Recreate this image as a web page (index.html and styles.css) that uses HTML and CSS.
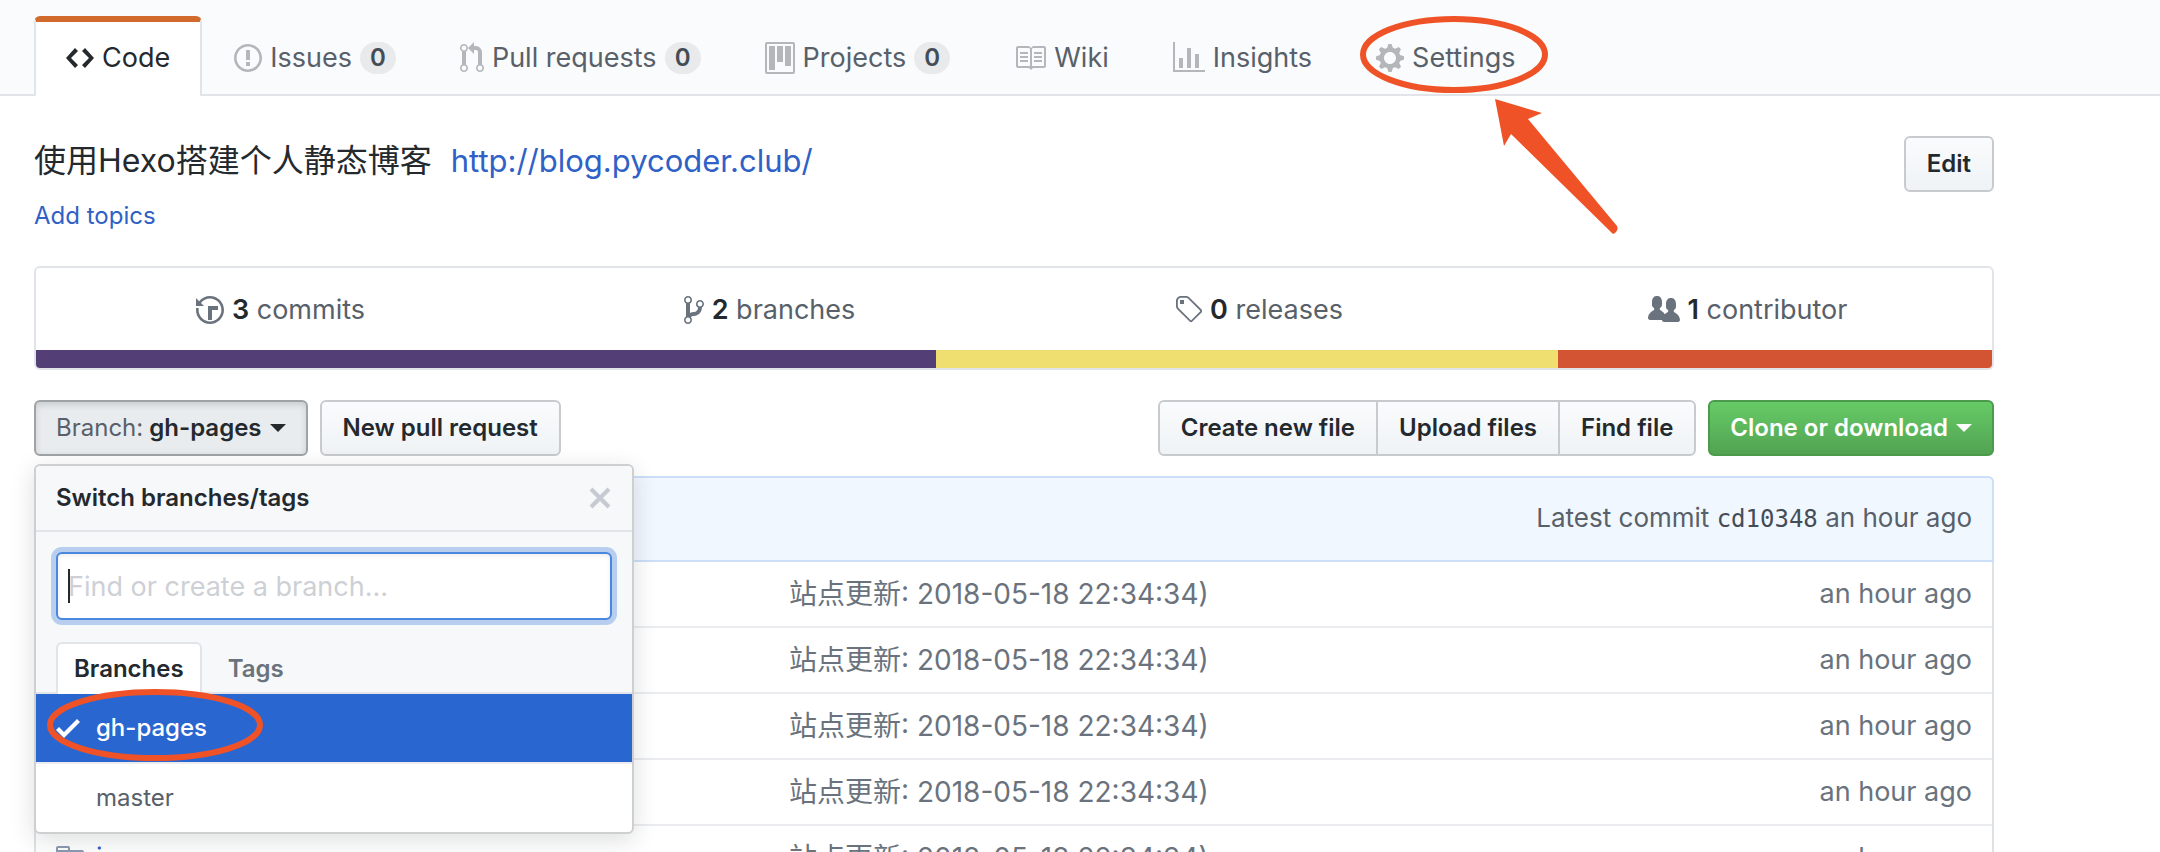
FILE: index.html
```html
<!DOCTYPE html>
<html lang="en">
<head>
<meta charset="utf-8">
<title>Repository</title>
<link rel="stylesheet" href="styles.css">
</head>
<body>
<header class="repo-head">
  <nav class="tabs" aria-label="Repository">
    <a class="tab tab-current" href="#code"><svg class="icon" width="28" height="32" viewBox="0 0 14 16"><path d="M9.5 3L8 4.5 11.5 8 8 11.5 9.5 13 14 8 9.5 3zm-5 0L0 8l4.5 5L6 11.5 2.5 8 6 4.5 4.5 3z"/></svg>Code</a>
    <a class="tab" href="#issues"><svg class="icon" width="28" height="32" viewBox="0 0 14 16"><path d="M7 2.3c3.14 0 5.7 2.56 5.7 5.7s-2.56 5.7-5.7 5.7A5.71 5.71 0 0 1 1.3 8c0-3.14 2.56-5.7 5.7-5.7zM7 1C3.14 1 0 4.14 0 8s3.14 7 7 7 7-3.14 7-7-3.14-7-7-7zm1 3H6v5h2V4zm0 6H6v2h2v-2z"/></svg>Issues<span class="counter">0</span></a>
    <a class="tab" href="#pulls"><svg class="icon" width="24" height="32" viewBox="0 0 12 16"><path d="M11 11.28V5c-.03-.78-.34-1.47-.94-2.06C9.46 2.35 8.78 2.03 8 2H7V0L4 3l3 3V4h1c.27.02.48.11.69.31.21.2.3.42.31.69v6.28A1.993 1.993 0 0 0 10 15a1.993 1.993 0 0 0 1-3.72zm-1 2.92c-.66 0-1.2-.55-1.2-1.2 0-.65.55-1.2 1.2-1.2.65 0 1.2.55 1.2 1.2 0 .65-.55 1.2-1.2 1.2zM4 3c0-1.11-.89-2-2-2a1.993 1.993 0 0 0-1 3.72v6.56A1.993 1.993 0 0 0 2 15a1.993 1.993 0 0 0 1-3.72V4.72c.59-.34 1-.98 1-1.72zm-.8 10c0 .66-.55 1.2-1.2 1.2-.65 0-1.2-.55-1.2-1.2 0-.65.55-1.2 1.2-1.2.65 0 1.2.55 1.2 1.2zM2 4.2C1.34 4.2.8 3.65.8 3c0-.65.55-1.2 1.2-1.2.65 0 1.2.55 1.2 1.2 0 .65-.55 1.2-1.2 1.2z"/></svg>Pull requests<span class="counter">0</span></a>
    <a class="tab" href="#projects"><svg class="icon" width="30" height="32" viewBox="0 0 15 16"><path fill-rule="evenodd" d="M10 12h3V2h-3v10zm-4-2h3V2H6v8zm-4 4h3V2H2v12zm-1 1h13V1H1v14zM14 0H1a1 1 0 0 0-1 1v14a1 1 0 0 0 1 1h13a1 1 0 0 0 1-1V1a1 1 0 0 0-1-1z"/></svg>Projects<span class="counter">0</span></a>
    <a class="tab" href="#wiki"><svg class="icon" width="32" height="32" viewBox="0 0 16 16"><path d="M3 5h4v1H3V5zm0 3h4V7H3v1zm0 2h4V9H3v1zm11-5h-4v1h4V5zm0 2h-4v1h4V7zm0 2h-4v1h4V9zm2-6v9c0 .55-.45 1-1 1H9.5l-1 1-1-1H2c-.55 0-1-.45-1-1V3c0-.55.45-1 1-1h5.5l1 1 1-1H15c.55 0 1 .45 1 1zm-8 .5L7.5 3H2v9h6V3.5zm7-.5H9.5l-.5.5V12h6V3z"/></svg>Wiki</a>
    <a class="tab" href="#insights"><svg class="icon" width="32" height="32" viewBox="0 0 16 16"><path d="M16 14v1H0V0h1v14h15zM5 13H3V8h2v5zm4 0H7V3h2v10zm4 0h-2V6h2v7z"/></svg>Insights</a>
    <a class="tab" href="#settings"><svg class="icon" width="28" height="32" viewBox="0 0 14 16"><path d="M14 8.77v-1.6l-1.94-.64-.45-1.09.88-1.84-1.13-1.13-1.81.91-1.09-.45-.69-1.92h-1.6l-.63 1.94-1.11.45-1.84-.88-1.13 1.13.91 1.81-.45 1.09L0 7.23v1.59l1.94.64.45 1.09-.88 1.84 1.13 1.13 1.81-.91 1.09.45.69 1.92h1.59l.63-1.94 1.11-.45 1.84.88 1.13-1.13-.92-1.81.47-1.09L14 8.75v.02zM7 11c-1.66 0-3-1.34-3-3s1.34-3 3-3 3 1.34 3 3-1.34 3-3 3z"/></svg>Settings<svg class="mark mark-settings" width="270" height="230" viewBox="1356 10 270 230" aria-hidden="true"><ellipse cx="1455" cy="54.500" rx="91" ry="35.500"/><path d="M1496 99L1543 113L1529 119L1618 226Q1620 231 1614 234L1512 134L1505 146Z"/></svg></a>
  </nav>
</header>

<main class="page">
  <section class="about">
    <div>
      <p class="about-text">使用Hexo搭建个人静态博客 <a class="about-link" href="http://blog.pycoder.club/">http://blog.pycoder.club/</a></p>
      <a class="topics" href="#topics">Add topics</a>
    </div>
    <button class="btn" type="button">Edit</button>
  </section>

  <section class="summary">
    <div class="stats">
      <a class="stat" href="#commits"><svg class="icon" width="28" height="32" viewBox="0 0 14 16"><path d="M8 13H6V6h5v2H8v5zM7 1C4.81 1 2.87 2.02 1.59 3.59L0 2v4h4L2.5 4.5C3.55 3.17 5.17 2.3 7 2.3c3.14 0 5.7 2.56 5.7 5.7s-2.56 5.7-5.7 5.7A5.71 5.71 0 0 1 1.3 8c0-.34.03-.67.09-1H.08C.03 7.33 0 7.66 0 8c0 3.86 3.14 7 7 7s7-3.14 7-7-3.14-7-7-7z"/></svg><span><b>3</b> commits</span></a>
      <a class="stat" href="#branches"><svg class="icon" width="20" height="32" viewBox="0 0 10 16"><path d="M10 5c0-1.110-.89-2-2-2a1.993 1.993 0 0 0-1 3.720v.3c-.02.52-.23.98-.63 1.380-.4.4-.86.61-1.380.63-.83.02-1.480.16-2 .45V4.720a1.993 1.993 0 0 0-1-3.720C.88 1 0 1.890 0 3a2 2 0 0 0 1 1.720v6.560c-.59.35-1 .99-1 1.720 0 1.110.89 2 2 2 1.110 0 2-.89 2-2 0-.53-.2-1-.53-1.360.09-.06.48-.41.59-.47.25-.11.56-.17.94-.17 1.050-.05 1.950-.45 2.750-1.250S8.950 7.770 9 6.730h-.02C9.590 6.370 10 5.730 10 5zM2 1.800c.66 0 1.200.55 1.200 1.200 0 .65-.55 1.200-1.200 1.200C1.350 4.200.8 3.650.8 3c0-.65.55-1.200 1.200-1.200zm0 12.410c-.66 0-1.200-.55-1.200-1.200 0-.65.55-1.200 1.200-1.200.65 0 1.200.55 1.200 1.200 0 .65-.55 1.200-1.200 1.200zm6-8c-.66 0-1.200-.55-1.200-1.200 0-.65.55-1.200 1.200-1.200.65 0 1.200.55 1.200 1.200 0 .65-.55 1.200-1.200 1.200z"/></svg><span><b>2</b> branches</span></a>
      <a class="stat" href="#releases"><svg class="icon" width="28" height="32" viewBox="0 0 14 16"><path d="M7.730 1.730C7.260 1.260 6.620 1 5.960 1H3.500C2.130 1 1 2.130 1 3.500v2.470c0 .66.27 1.300.73 1.770l6.060 6.060c.39.39 1.020.39 1.410 0l4.590-4.590a.996.996 0 0 0 0-1.410L7.730 1.730zM2.380 7.090c-.31-.3-.47-.7-.47-1.130V3.500c0-.88.72-1.590 1.590-1.590h2.470c.42 0 .83.16 1.130.47l6.140 6.130-4.730 4.730-6.130-6.150zM3.010 3h2v2H3V3h.01z"/></svg><span><b>0</b> releases</span></a>
      <a class="stat" href="#contributors"><svg class="icon" width="32" height="32" viewBox="0 0 16 16"><path d="M16 12.999c0 .439-.45 1-1 1H7.995c-.539 0-.994-.447-.995-.999H1c-.54 0-1-.561-1-1 0-2.634 3-4 3-4s.229-.409 0-1c-.841-.621-1.058-.59-1-3 .058-2.419 1.367-3 2.500-3s2.442.58 2.500 3c.058 2.410-.159 2.379-1 3-.229.59 0 1 0 1s1.549.711 2.420 2.088C9.196 9.369 10 8.999 10 8.999s.229-.409 0-1c-.841-.62-1.058-.59-1-3 .058-2.419 1.367-3 2.500-3s2.437.581 2.495 3c.059 2.410-.158 2.380-1 3-.229.59 0 1 0 1s3.005 1.366 3.005 4z"/></svg><span><b>1</b> contributor</span></a>
    </div>
    <div class="languages">
      <span class="lang lang-purple" style="width: 46%"></span>
      <span class="lang lang-yellow" style="width: 31.8%"></span>
      <span class="lang lang-red" style="width: 22.2%"></span>
    </div>
  </section>

  <section class="toolbar">
    <div class="branch-menu">
      <button class="btn btn-menu btn-open" type="button" aria-expanded="true"><span class="btn-prefix">Branch:</span> gh-pages<span class="caret"></span></button>
      <div class="popup">
        <div class="popup-head"><span>Switch branches/tags</span><button class="close" type="button" aria-label="Close"><svg class="icon" width="24" height="32" viewBox="0 0 12 16"><path d="M7.480 8l3.750 3.750-1.480 1.480L6 9.480l-3.750 3.750-1.480-1.480L4.520 8 .77 4.250l1.480-1.480L6 6.520l3.750-3.750 1.480 1.480L7.480 8z"/></svg></button></div>
        <div class="popup-filter">
          <div class="filter-box"><input class="filter" type="text" aria-label="Find or create a branch" placeholder="Find or create a branch..." autofocus></div>
          <div class="popup-tabs">
            <button class="popup-tab popup-tab-current" type="button">Branches</button>
            <button class="popup-tab" type="button">Tags</button>
          </div>
        </div>
        <a class="branch branch-current" href="#gh-pages"><svg class="icon" width="24" height="32" viewBox="0 0 12 16"><path d="M12 5l-8 8-4-4 1.500-1.500L4 10l6.500-6.500L12 5z"/></svg>gh-pages<svg class="mark mark-branch" width="220" height="78" viewBox="0 0 220 78" aria-hidden="true"><ellipse cx="110" cy="39" rx="105" ry="33"/></svg></a>
        <a class="branch" href="#master">master</a>
      </div>
    </div>
    <button class="btn" type="button">New pull request</button>
    <div class="btn-group">
      <button class="btn" type="button">Create new file</button>
      <button class="btn" type="button">Upload files</button>
      <button class="btn" type="button">Find file</button>
    </div>
    <button class="btn btn-menu btn-primary" type="button">Clone or download<span class="caret"></span></button>
  </section>

  <section class="files">
    <div class="commit">Latest commit <a class="sha" href="#cd10348">cd10348</a> an hour ago</div>
    <table class="file-table">
      <tbody>
        <tr><td class="name"></td><td class="message">站点更新: 2018-05-18 22:34:34)</td><td class="age">an hour ago</td></tr>
        <tr><td class="name"></td><td class="message">站点更新: 2018-05-18 22:34:34)</td><td class="age">an hour ago</td></tr>
        <tr><td class="name"></td><td class="message">站点更新: 2018-05-18 22:34:34)</td><td class="age">an hour ago</td></tr>
        <tr><td class="name"></td><td class="message">站点更新: 2018-05-18 22:34:34)</td><td class="age">an hour ago</td></tr>
        <tr><td class="name"><a class="folder" href="#i"><svg class="icon" width="28" height="32" viewBox="0 0 14 16"><path fill-rule="evenodd" d="M13 4H7V3c0-.66-.31-1-1-1H1c-.55 0-1 .45-1 1v10c0 .55.45 1 1 1h12c.55 0 1-.45 1-1V5c0-.55-.45-1-1-1zM6 4H1V3h5v1z"/></svg>i</a></td><td class="message">站点更新: 2018-05-18 22:34:34)</td><td class="age">an hour ago</td></tr>
      </tbody>
    </table>
  </section>
</main>
</body>
</html>
```

FILE: styles.css
```css
* { box-sizing: border-box; }

body {
  margin: 0;
  height: 100vh;
  overflow: hidden;
  background: #fff;
  color: #24292e;
  font: 27px/40px Inter, "Noto Sans CJK SC", sans-serif;
}

a { color: #0366d6; text-decoration: none; }
button, input { font: inherit; }
b { font-weight: 600; color: #24292e; }
.icon { display: block; flex: none; fill: currentColor; }

/* Tab bar */
.repo-head {
  padding: 16px 34px 0;
  background: #fafbfc;
  border-bottom: 2px solid #e1e4e8;
}
.tabs { display: flex; margin-bottom: -2px; }
.tab {
  position: relative;
  display: flex;
  align-items: center;
  gap: 8px;
  height: 80px;
  padding: 0 30px 2px;
  border: 2px solid transparent;
  border-top: 6px solid transparent;
  border-bottom: 0;
  border-radius: 6px 6px 0 0;
  color: #586069;
  white-space: nowrap;
}
.tab .icon { color: #b4b7ba; }
.tab-current { background: #fff; border-color: #d26a2e #e1e4e8 #fff; color: #24292e; }
.tab-current .icon { color: #24292e; }
.counter {
  min-width: 36px;
  padding: 0 10px;
  border-radius: 20px;
  background: #e8eaec;
  color: #444d56;
  font-size: 24px;
  font-weight: 600;
  line-height: 32px;
  text-align: center;
}

/* Hand-drawn highlights */
.mark { position: absolute; z-index: 5; overflow: visible; pointer-events: none; fill: #ee5226; }
.mark ellipse { fill: none; stroke: #ee5226; stroke-width: 6; }
.mark-settings { left: 9px; top: -12px; }
.mark-branch { left: 9px; top: -8px; }

.page { padding: 40px 166px 0 34px; }

/* Description */
.about { display: flex; justify-content: space-between; align-items: flex-start; margin-bottom: 32px; }
.about-text { margin: 0 0 12px; font-size: 32px; line-height: 50px; }
.about-link { margin-left: 10px; font-size: 31px; }
.about-link, .topics, .folder { color: #2f61c6; }
.topics { display: block; font-size: 24px; line-height: 36px; }

/* Buttons */
.btn {
  display: inline-flex;
  align-items: center;
  justify-content: center;
  height: 56px;
  padding: 0 21px;
  border: 2px solid #c8cbce;
  border-radius: 6px;
  background: linear-gradient(#fafbfc, #eff3f6);
  color: #24292e;
  font-size: 24px;
  font-weight: 600;
  white-space: pre;
}
.btn-menu { padding: 0 20px; }
.btn-open { background: #e9ecef; border-color: #a0a3a6; box-shadow: inset 0 3px 6px #1b1f2326; }
.btn-prefix { color: #586069; font-weight: 400; }
.btn-primary { background: linear-gradient(#66cb66, #52a352); border-color: #4c9a4c; color: #fff; }
.caret { margin-left: 8px; border: 8px solid transparent; border-top-color: currentColor; border-bottom: 0; }
.btn-group { display: flex; margin-left: auto; }
.btn-group .btn + .btn { margin-left: -2px; }
.btn-group .btn:not(:first-child) { border-top-left-radius: 0; border-bottom-left-radius: 0; }
.btn-group .btn:not(:last-child) { border-top-right-radius: 0; border-bottom-right-radius: 0; }

/* Counts and language bar */
.summary { border: 2px solid #e1e4e8; border-radius: 6px; overflow: hidden; }
.stats { display: grid; grid-template-columns: repeat(4, 1fr); }
.stat { display: flex; align-items: center; justify-content: center; gap: 8px; height: 82px; padding-top: 2px; color: #586069; }
.stat .icon { color: #6a737d; }
.languages { display: flex; height: 18px; }
.lang-purple { background: #533f75; }
.lang-yellow { background: #efdf70; }
.lang-red { background: #d35433; }

.toolbar { display: flex; gap: 12px; margin: 30px 0 20px; }

/* Branch popup */
.branch-menu { position: relative; }
.popup {
  position: absolute;
  z-index: 3;
  top: 64px;
  left: 0;
  width: 600px;
  border: 2px solid #cdcfd1;
  border-radius: 6px;
  background: #fff;
  box-shadow: 0 6px 24px #1b1f2326;
  font-size: 24px;
}
.popup-head {
  display: flex;
  align-items: center;
  justify-content: space-between;
  height: 66px;
  padding: 0 20px;
  border-bottom: 2px solid #e1e4e8;
  border-radius: 6px 6px 0 0;
  background: #f6f8fa;
  font-weight: 600;
}
.close { padding: 0; border: 0; background: none; color: #c6cbd1; }
.popup-filter { padding: 20px 20px 0; background: #f6f8fa; border-bottom: 2px solid #e1e4e8; }
.filter-box { position: relative; }
.filter-box:focus-within::after {
  content: "";
  position: absolute;
  left: 12px;
  top: 17px;
  width: 2px;
  height: 34px;
  background: #24292e;
}
.filter {
  display: block;
  width: 100%;
  height: 68px;
  padding: 0 10px;
  border: 2px solid #4a87e0;
  border-radius: 6px;
  outline: 0;
  background: #fff;
  box-shadow: inset 0 2px 4px #1b1f2313, 0 0 0 5px #b8ceef;
  color: #24292e;
  caret-color: transparent;
  font-size: 27px;
}
.filter::placeholder { color: #cdd0d5; opacity: 1; }
.popup-tabs { display: flex; margin: 22px 0 -2px; }
.popup-tab {
  height: 52px;
  padding: 0 16px;
  border: 2px solid transparent;
  border-bottom: 0;
  border-radius: 6px 6px 0 0;
  background: none;
  color: #6a737d;
  font-weight: 600;
}
.popup-tab + .popup-tab { margin-left: 8px; }
.popup-tab-current { border-color: #e1e4e8; background: #fff; color: #24292e; }
.branch { position: relative; display: flex; align-items: center; height: 68px; padding-left: 60px; color: #586069; }
.branch-current { height: 70px; gap: 16px; padding-left: 20px; border-bottom: 2px solid #eaecef; background: #2a66d0; color: #fff; font-weight: 500; }

/* File list */
.files { border: 2px solid #dfe2e5; border-top: 0; border-radius: 6px; }
.commit {
  margin: 0 -2px;
  padding: 20px 20px 22px;
  border: 2px solid #cbdff8;
  border-radius: 6px 6px 0 0;
  background: #f1f7ff;
  color: #586069;
  font-size: 26px;
  text-align: right;
}
.sha { color: #444d56; font-family: "DejaVu Sans Mono", monospace; font-size: 24px; line-height: 24px; }
.file-table { width: 100%; border-spacing: 0; color: #6a737d; }
.file-table td { height: 66px; padding: 0; border-top: 2px solid #eaecef; }
.file-table tr:first-child td { height: 64px; border-top: 0; }
.file-table .name { width: 753px; padding-left: 20px; }
.file-table .message { font-size: 28px; }
.file-table .age { padding-right: 20px; text-align: right; }
.folder { display: flex; align-items: center; gap: 12px; }
.folder .icon { color: #8a9bb3; }
```
